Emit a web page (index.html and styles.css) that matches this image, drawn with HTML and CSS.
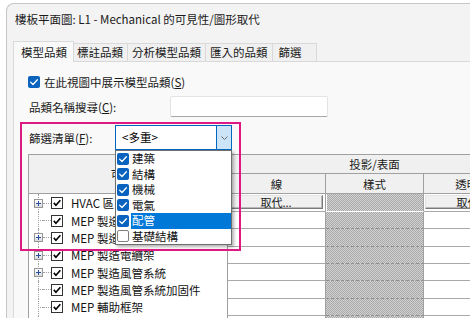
FILE: index.html
```html
<!DOCTYPE html>
<html lang="zh-Hant">
<head>
<meta charset="utf-8">
<title>可見性/圖形取代</title>
<link rel="stylesheet" href="styles.css">
</head>
<body>
<div class="window">
  <div class="titlebar">樓板平面圖: L1 - Mechanical 的可見性/圖形取代</div>
  <div class="tabs">
    <div class="tab active">模型品類</div>
    <div class="tab">標註品類</div>
    <div class="tab">分析模型品類</div>
    <div class="tab">匯入的品類</div>
    <div class="tab tab-short">篩選</div>
  </div>
  <div class="panel">
    <label class="show-row">
      <span class="cb-blue"><svg viewBox="0 0 12 12"><path d="M2.6 6.1 L5 8.5 L9.4 3.7" /></svg></span>
      <span>在此視圖中展示模型品類(<u>S</u>)</span>
    </label>
    <div class="search-row">
      <label class="lbl">品類名稱搜尋(<u>C</u>):</label>
      <span class="input"></span>
    </div>
    <div class="filter-row">
      <label class="lbl lbl-filter">篩選清單(<u>F</u>):</label>
      <div class="combo">
        <span class="combo-text">&lt;多重&gt;</span>
        <span class="combo-btn"><svg viewBox="0 0 7 4"><path d="M0.5 0.5 L3.5 3.5 L6.5 0.5" /></svg></span>
      </div>
    </div>

    <div class="grid">
      <div class="hd hd-vis">可見性</div>
      <div class="hd hd-proj">投影/表面</div>
      <div class="hd">線</div>
      <div class="hd">樣式</div>
      <div class="hd">透明度</div>

      <div class="tree"><span class="exp"></span><span class="link"></span><span class="tcb"><svg viewBox="0 0 11 11"><path d="M2 5.4 L4.3 7.9 L9.2 2.4" /></svg></span><span class="name">HVAC 區</span></div>
      <div class="cell"><span class="btn">取代...</span></div>
      <div class="cell pat pat-top"></div>
      <div class="cell"><span class="btn">取代...</span></div>

      <div class="tree"><span class="exp leaf"></span><span class="link"></span><span class="tcb"><svg viewBox="0 0 11 11"><path d="M2 5.4 L4.3 7.9 L9.2 2.4" /></svg></span><span class="name">MEP 製造吊架</span></div>
      <div class="cell"></div>
      <div class="cell pat"></div>
      <div class="cell"></div>

      <div class="tree"><span class="exp"></span><span class="link"></span><span class="tcb"><svg viewBox="0 0 11 11"><path d="M2 5.4 L4.3 7.9 L9.2 2.4" /></svg></span><span class="name">MEP 製造管網</span></div>
      <div class="cell"></div>
      <div class="cell pat"></div>
      <div class="cell"></div>

      <div class="tree"><span class="exp"></span><span class="link"></span><span class="tcb"><svg viewBox="0 0 11 11"><path d="M2 5.4 L4.3 7.9 L9.2 2.4" /></svg></span><span class="name">MEP 製造電纜架</span></div>
      <div class="cell"></div>
      <div class="cell pat"></div>
      <div class="cell"></div>

      <div class="tree"><span class="exp"></span><span class="link"></span><span class="tcb"><svg viewBox="0 0 11 11"><path d="M2 5.4 L4.3 7.9 L9.2 2.4" /></svg></span><span class="name">MEP 製造風管系統</span></div>
      <div class="cell"></div>
      <div class="cell pat"></div>
      <div class="cell"></div>

      <div class="tree"><span class="exp leaf"></span><span class="link"></span><span class="tcb"><svg viewBox="0 0 11 11"><path d="M2 5.4 L4.3 7.9 L9.2 2.4" /></svg></span><span class="name">MEP 製造風管系統加固件</span></div>
      <div class="cell"></div>
      <div class="cell pat"></div>
      <div class="cell"></div>

      <div class="tree"><span class="exp leaf"></span><span class="link"></span><span class="tcb"><svg viewBox="0 0 11 11"><path d="M2 5.4 L4.3 7.9 L9.2 2.4" /></svg></span><span class="name">MEP 輔助框架</span></div>
      <div class="cell"></div>
      <div class="cell pat"></div>
      <div class="cell"></div>

      <div class="tree"><span class="exp"></span><span class="link"></span><span class="tcb"><svg viewBox="0 0 11 11"><path d="M2 5.4 L4.3 7.9 L9.2 2.4" /></svg></span><span class="name">一般模型</span></div>
      <div class="cell"></div>
      <div class="cell pat"></div>
      <div class="cell"></div>
    </div>

    <div class="annot"></div>

    <ul class="dropdown">
      <li class="item"><span class="cb-blue"><svg viewBox="0 0 12 12"><path d="M2.6 6.1 L5 8.5 L9.4 3.7" /></svg></span><span class="item-text">建築</span></li>
      <li class="item"><span class="cb-blue"><svg viewBox="0 0 12 12"><path d="M2.6 6.1 L5 8.5 L9.4 3.7" /></svg></span><span class="item-text">結構</span></li>
      <li class="item"><span class="cb-blue"><svg viewBox="0 0 12 12"><path d="M2.6 6.1 L5 8.5 L9.4 3.7" /></svg></span><span class="item-text">機械</span></li>
      <li class="item"><span class="cb-blue"><svg viewBox="0 0 12 12"><path d="M2.6 6.1 L5 8.5 L9.4 3.7" /></svg></span><span class="item-text">電氣</span></li>
      <li class="item selected"><span class="cb-blue"><svg viewBox="0 0 12 12"><path d="M2.6 6.1 L5 8.5 L9.4 3.7" /></svg></span><span class="item-text">配管</span></li>
      <li class="item"><span class="cb-empty"></span><span class="item-text">基礎結構</span></li>
    </ul>
  </div>
</div>
</body>
</html>
```

FILE: styles.css
```css
* { box-sizing: border-box; }
html, body { margin: 0; padding: 0; }
body {
  width: 470px;
  height: 318px;
  overflow: hidden;
  background: #ffffff;
  font-family: "Noto Sans CJK TC", "Noto Sans", sans-serif;
  font-size: 11.5px;
  color: #000;
}

.window {
  margin: 3px 0 0 6px;
  width: 600px;
  height: 400px;
  border-top: 1px solid #c6c6c6;
  border-left: 1px solid #c6c6c6;
  border-top-left-radius: 8px;
  background: #f3f3f3;
}

.titlebar {
  height: 30px;
  line-height: 30px;
  padding-left: 8px;
  font-size: 11.5px;
  color: #1a1a1a;
  white-space: nowrap;
}

/* tabs */
.tabs {
  display: flex;
  align-items: flex-end;
  height: 27px;
  padding-left: 6px;
}
.tab {
  height: 18px;
  line-height: 16px;
  padding: 0 4px;
  border: 1px solid #d9d9d9;
  border-bottom: 0;
  margin-left: -1px;
  background: #f0f0f0;
  color: #1a1a1a;
  white-space: nowrap;
}
.tab-short { min-width: 45px; padding-left: 6px; }
.tab.active {
  position: relative;
  z-index: 1;
  height: 21px;
  line-height: 20px;
  margin: 0 -1px -1px 0;
  padding: 0 6px 0 7px;
  background: #f9f9f9;
}

/* panel */
.panel {
  position: relative;
  margin-left: 6px;
  height: 360px;
  border: 1px solid #d9d9d9;
  background: #f9f9f9;
  overflow: hidden;
}

.show-row {
  display: flex;
  align-items: center;
  height: 20px;
  margin-top: 10px;
  padding-left: 14px;
  gap: 4px;
  color: #1a1a1a;
}

.cb-blue {
  display: inline-flex;
  width: 12px;
  height: 12px;
  border-radius: 2px;
  background: #0a64bf;
  flex: none;
}
.cb-blue svg { width: 12px; height: 12px; }
.cb-blue path { fill: none; stroke: #fff; stroke-width: 1.3; stroke-linecap: round; stroke-linejoin: round; }
.cb-empty {
  display: inline-block;
  width: 12px;
  height: 12px;
  border-radius: 2px;
  border: 1px solid #7f7f7f;
  background: #fff;
  flex: none;
}

.search-row, .filter-row {
  display: flex;
  align-items: center;
}
.search-row { height: 21px; margin-top: 4px; }
.filter-row { height: 25px; margin-top: 8px; }
.lbl {
  width: 156px;
  padding-left: 15px;
  color: #1a1a1a;
  flex: none;
}
.lbl-filter { width: 101px; }
.input {
  width: 158px;
  height: 21px;
  background: #fff;
  border: 1px solid #e3e3e3;
  border-bottom-color: #a8a8a8;
  border-radius: 2px;
}

.combo {
  display: flex;
  width: 117px;
  height: 25px;
  border: 1px solid #0067c0;
  background: #fff;
}
.combo-text {
  flex: 1;
  padding-left: 6px;
  line-height: 23px;
}
.combo-btn {
  width: 15px;
  background: #cce4f7;
  border-left: 1px solid #0067c0;
  display: flex;
  align-items: center;
  justify-content: center;
}
.combo-btn svg { width: 7px; height: 4px; }
.combo-btn path { fill: none; stroke: #6d6d6d; stroke-width: 1; }

/* grid */
.grid {
  margin: 4px 0 0 14px;
  display: grid;
  grid-template-columns: 199px 98px 98px 98px;
  grid-template-rows: 19px 20px 18px repeat(8, 17.33px);
  width: max-content;
  border-top: 1px solid #a0a0a0;
  border-left: 1px solid #a0a0a0;
  background: #fff;
}
.hd {
  display: flex;
  align-items: center;
  justify-content: center;
  background: #f0f0f0;
  border-right: 1px solid #a0a0a0;
  border-bottom: 1px solid #a0a0a0;
  color: #1a1a1a;
}
.hd-vis { grid-row: span 2; }
.hd-proj { grid-column: span 3; }

.tree {
  position: relative;
  display: flex;
  align-items: center;
  padding-left: 5px;
  border-right: 1px solid #a0a0a0;
  white-space: nowrap;
}
.tree::before {
  content: "";
  position: absolute;
  left: 9px;
  top: 0;
  bottom: 0;
  border-left: 1px dotted #a0a0a0;
}
.exp {
  position: relative;
  z-index: 1;
  width: 9px;
  height: 9px;
  flex: none;
  border: 1px solid #969696;
  background:
    linear-gradient(#2a4f9e, #2a4f9e) center / 5px 1px no-repeat,
    linear-gradient(#2a4f9e, #2a4f9e) center / 1px 5px no-repeat,
    linear-gradient(#ffffff, #dadada);
}
.exp.leaf {
  width: 5px;
  height: 1px;
  margin-left: 4px;
  border: 0;
  border-top: 1px dotted #a0a0a0;
  background: none;
}
.link {
  width: 8px;
  height: 1px;
  flex: none;
  border-top: 1px dotted #a0a0a0;
}
.tcb {
  display: inline-flex;
  width: 12px;
  height: 12px;
  flex: none;
  border: 1px solid #333;
  background: #fff;
}
.tcb svg { width: 10px; height: 10px; }
.tcb path { fill: none; stroke: #000; stroke-width: 1.8; }
.name { margin-left: 8px; color: #111; }

.cell {
  border-right: 1px solid #a0a0a0;
  border-bottom: 1px solid #a9a9a9;
  background: #fff;
  padding: 1px 2px 2px 1px;
  display: flex;
}
.btn {
  flex: 1;
  display: flex;
  align-items: center;
  justify-content: center;
  background: #f0f0f0;
  border: 1px solid #e4e4e4;
  border-right-color: #7a7a7a;
  border-bottom-color: #7a7a7a;
  box-shadow: inset -1px -1px 0 #b9b9b9;
  color: #1a1a1a;
  font-size: 11px;
}
.pat {
  background: repeating-conic-gradient(#a9a9a9 0 25%, #d2d2d2 0 50%) 0 0 / 2px 2px;
  border-bottom: 1px dashed #8f8f8f;
}
.pat-top {
  border-bottom: 1px solid #ffffff;
  box-shadow: inset 1px 0 0 #ffffff;
}

/* annotation box */
.annot {
  position: absolute;
  left: 6px;
  top: 60px;
  width: 221px;
  height: 129px;
  border: 2px solid #dc1a82;
  z-index: 5;
}

/* dropdown */
.dropdown {
  position: absolute;
  left: 101px;
  top: 88px;
  width: 117px;
  margin: 0;
  padding: 0;
  list-style: none;
  background: #fff;
  border: 1px solid #6e6e6e;
  box-shadow: 2px 2px 3px rgba(0, 0, 0, 0.3);
  z-index: 4;
}
.item {
  display: flex;
  align-items: center;
  height: 15.5px;
  padding-left: 1px;
}
.item-text {
  flex: 1;
  margin-left: 2px;
  padding-left: 1px;
  height: 100%;
  line-height: 15px;
  color: #111;
}
.item.selected .item-text {
  background: #0078d7;
  color: #fff;
}
```
